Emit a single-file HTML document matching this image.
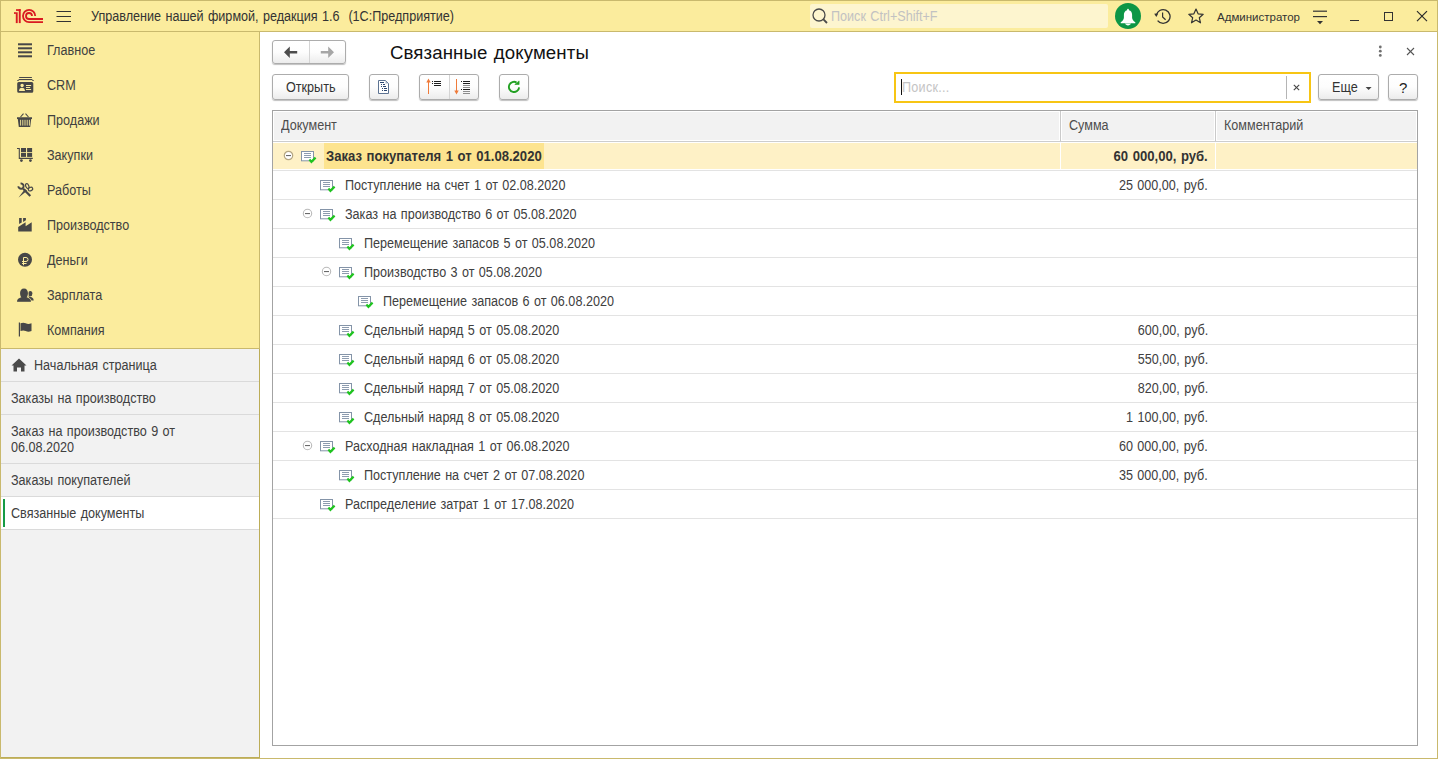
<!DOCTYPE html>
<html><head><meta charset="utf-8">
<style>
*{margin:0;padding:0;box-sizing:border-box}
html,body{width:1438px;height:759px;overflow:hidden;background:#fff;font-family:"Liberation Sans",sans-serif;font-size:13px;color:#404040}
.a{position:absolute}
.t{position:absolute;white-space:pre;line-height:16px;font-size:14px;transform:scaleX(.9);transform-origin:0 0;word-spacing:1px}
.r{transform-origin:100% 0}
.b{transform:scaleX(.935)}
#frame{position:absolute;left:0;top:0;width:1438px;height:759px;border:1px solid #c9b96d;pointer-events:none;z-index:50}
#hdr{position:absolute;left:0;top:0;width:1438px;height:32px;background:#fbec9d;border-bottom:1px solid #c9b96d}
#side{position:absolute;left:0;top:32px;width:260px;height:317px;background:#fbec9d;border-right:1px solid #c9b96d;border-bottom:1px solid #c9b96d}
#ow{position:absolute;left:0;top:349px;width:260px;height:409px;background:#f2f2f2;border-right:1px solid #bcad58;border-bottom:1px solid #bcad58}
.owl{position:absolute;left:1px;width:258px;height:1px;background:#dadada}
.btn{position:absolute;height:26px;border:1px solid #acacac;border-radius:3px;background:linear-gradient(#fff 0%,#fdfdfd 50%,#ececec 100%);box-shadow:0 1px 1px rgba(0,0,0,.25)}
.row{position:absolute;left:273px;width:1144px;height:1px;background:#e3e3e3}
.ic{position:absolute}
</style></head><body>

<div id="hdr"></div>
<svg class="a" style="left:0;top:0" width="50" height="31" viewBox="0 0 50 31">
 <g fill="#d91a21">
  <rect x="16" y="9.2" width="4.7" height="1.7"/>
  <rect x="15.8" y="12.3" width="1.9" height="10.8"/>
  <rect x="18.8" y="9.2" width="1.9" height="13.9"/>
  <rect x="14" y="12.2" width="1.9" height="1.7"/>
 </g>
 <g fill="none" stroke="#d91a21" stroke-width="1.8">
  <path d="M35.2 16 A6.1 6.1 0 1 0 29.1 22.1 L43 22.1"/>
  <path d="M32 16 A3 3 0 1 0 29 19 L43 19"/>
 </g>
</svg>
<svg class="a" style="left:55px;top:9px" width="18" height="15">
 <g stroke="#333" stroke-width="1"><line x1="1.5" y1="2.5" x2="16" y2="2.5"/><line x1="1.5" y1="7.5" x2="16" y2="7.5"/><line x1="1.5" y1="12.5" x2="16" y2="12.5"/></g>
</svg>
<div class="t" style="left:91px;top:8px;color:#333">Управление нашей фирмой, редакция 1.6  (1С:Предприятие)</div>
<div class="a" style="left:810px;top:4px;width:298px;height:24px;background:#fdf5cf;border-radius:2px"></div>
<svg class="a" style="left:810px;top:6px" width="20" height="20">
 <circle cx="9" cy="9" r="6" fill="none" stroke="#4a4a4a" stroke-width="1.3"/><line x1="13.2" y1="13.2" x2="17" y2="17" stroke="#4a4a4a" stroke-width="1.8"/>
</svg>
<div class="t" style="left:831px;top:8px;color:#c2c2c2">Поиск Ctrl+Shift+F</div>
<div class="a" style="left:1115px;top:3px;width:26px;height:26px;border-radius:50%;background:#0d9646"></div>
<svg class="a" style="left:1115px;top:3px" width="26" height="26">
 <path d="M13 5.8c-.6 0-.9.4-.9.9v.5c-2.1.5-3.2 2.3-3.2 4.6v2.6c0 1.9-1.1 3.2-3.2 4.9v.9h14.6v-.9c-2.1-1.7-3.2-3-3.2-4.9v-2.6c0-2.3-1.1-4.1-3.2-4.6v-.5c0-.5-.3-.9-.9-.9z" fill="#fff"/>
 <path d="M10 20.6h6c-.4 1.1-1.6 1.8-3 1.8s-2.6-.7-3-1.8z" fill="#fff"/>
</svg>
<svg class="a" style="left:1153px;top:8px" width="18" height="18">
 <path d="M3.3 7.6 A6.9 6.9 0 1 1 4.6 12.6" fill="none" stroke="#333" stroke-width="1.3"/>
 <path d="M1.2 5.8 L5.2 5.2 L3.4 9 Z" fill="#333"/>
 <path d="M9.6 4.5 V9 L12.6 11.8" fill="none" stroke="#333" stroke-width="1.2"/>
</svg>
<svg class="a" style="left:1188px;top:8px" width="17" height="17">
 <path d="M8 1 L10.1 5.8 L15.2 6.3 L11.3 9.7 L12.5 14.8 L8 12.1 L3.5 14.8 L4.7 9.7 L0.8 6.3 L5.9 5.8 Z" fill="none" stroke="#333" stroke-width="1.2" stroke-linejoin="round"/>
</svg>
<div class="t" style="left:1217px;top:9px;font-size:11.5px;color:#333;transform:none">Администратор</div>
<svg class="a" style="left:1312px;top:8px" width="16" height="18">
 <g fill="#333"><rect x="1" y="2.6" width="14" height="1.2"/><rect x="1" y="8" width="14" height="1.2"/></g>
 <path d="M5 13 H11 L8 16.2 Z" fill="#333"/>
</svg>
<div class="a" style="left:1350px;top:20px;width:9px;height:1px;background:#333"></div>
<div class="a" style="left:1384px;top:12px;width:9px;height:9px;border:1px solid #333"></div>
<svg class="a" style="left:1415px;top:10px" width="13" height="13">
 <g stroke="#2a2a2a" stroke-width="1.15"><line x1="2" y1="1.2" x2="12" y2="11.2"/><line x1="12" y1="1.2" x2="2" y2="11.2"/></g>
</svg>


<div id="side"></div>
<svg class="a" style="left:0;top:32px" width="40" height="316" viewBox="0 32 40 316">
 <g fill="#474747">
  <!-- main: 4 bars -->
  <rect x="18" y="43.3" width="14" height="2"/><rect x="18" y="47.3" width="14" height="2"/><rect x="18" y="51.3" width="14" height="2"/><rect x="18" y="55.3" width="14" height="2"/>
  <!-- CRM card -->
  <rect x="19" y="77" width="13" height="1.1" rx=".5"/>
  <rect x="18.6" y="79" width="13.8" height="1.1"/><rect x="17.3" y="80" width="1.4" height="1"/><rect x="32.3" y="80" width="1.4" height="1"/>
  <path d="M18.7 82 h13.1 a1.5 1.5 0 0 1 1.5 1.5 v7.7 a1.5 1.5 0 0 1 -1.5 1.5 h-13.1 a1.5 1.5 0 0 1 -1.5 -1.5 v-7.7 a1.5 1.5 0 0 1 1.5 -1.5z M22.1 83.7 a1.7 1.7 0 1 0 .01 0z M19 91 h6 c0-2.1-1.3-3.3-3-3.3 s-3 1.2-3 3.3z M26 84.9 h5.1 v1 h-5.1z M26 86.9 h4.2 v1 h-4.2z M26 88.9 h5.1 v1 h-5.1z" fill-rule="evenodd"/>
  <!-- basket -->
  <path d="M17 117.3 h15 v1.6 h-0.8 l-1 8 h-11.4 l-1 -8 h-0.8z" /><g stroke="#fbec9d" stroke-width="0.9"><line x1="20.6" y1="119.8" x2="20.6" y2="125.6"/><line x1="22.8" y1="119.8" x2="22.8" y2="125.6"/><line x1="25" y1="119.8" x2="25" y2="125.6"/><line x1="27.2" y1="119.8" x2="27.2" y2="125.6"/><line x1="29.4" y1="119.8" x2="29.4" y2="125.6"/></g>
  <path d="M20.5 117 l3 -3.3 M28.5 117 l-3 -3.3" stroke="#474747" stroke-width="1.1" fill="none"/>
  <!-- cart -->
  <path d="M17 148.5 H19.3 V158.4 H32.8" stroke="#474747" stroke-width="1.1" fill="none"/>
  <rect x="21" y="148" width="5" height="4.2"/><rect x="27.1" y="148" width="5" height="4.2"/>
  <rect x="21" y="153" width="5" height="3.9"/><rect x="27.1" y="153" width="5" height="3.9"/>
  <circle cx="21.4" cy="160.6" r="1.4"/><circle cx="30.4" cy="160.6" r="1.4"/>
  <!-- tools -->
  <path d="M18.4 186.2 A2.6 2.6 0 1 0 20.55 183.6" stroke="#474747" stroke-width="1.9" fill="none"/>
  <path d="M23.2 188.8 L30.3 196" stroke="#474747" stroke-width="2.2" fill="none"/>
  <ellipse cx="27.3" cy="186.1" rx="1.5" ry="2.5" transform="rotate(-25 27.3 186.1)" stroke="#474747" stroke-width="1.15" fill="none"/>
  <ellipse cx="30.5" cy="189.1" rx="2.3" ry="1.7" transform="rotate(-25 30.5 189.1)" stroke="#474747" stroke-width="1.15" fill="none"/>
  <path d="M18.6 197.4 L24.9 188.9 L27.1 190.8 Z"/>
  <!-- factory -->
  <path d="M18.2 231.6 V227 L25.6 222.3 V226.2 L31.7 222.3 V231.6 Z"/>
  <path d="M19.1 218 H21.7 V222.5 L19.1 224.1 Z"/><path d="M23.1 218 H25.9 V220.2 L23.1 221.9 Z"/>
  <!-- ruble -->
  <circle cx="25" cy="259.8" r="7"/>
  <g stroke="#fbec9d" stroke-width="1" fill="none"><path d="M23.5 265.2 V257.5 H26 A2 2 0 0 1 26 261.5 H22"/><path d="M22 263.5 H26.5"/></g>
  <!-- people -->
  <ellipse cx="30.3" cy="293.6" rx="2.1" ry="2.7"/>
  <path d="M28.4 296.2 c2.6 .4 5.2 1.4 5.2 3.8 v.6 h-4z"/>
  <path d="M17 301.8 c0-2.6 1.9-3.8 4.4-4.5 c-.9-.9-1.3-2.4-1.3-4.2 c0-2.6 1.6-4.7 3.9-4.7 s3.9 2.1 3.9 4.7 c0 1.8-.4 3.3-1.3 4.2 c2.5 .7 4.4 1.9 4.4 4.5z" stroke="#fbec9d" stroke-width="1.2"/>
  <path d="M17 301.8 c0-2.6 1.9-3.8 4.4-4.5 c-.9-.9-1.3-2.4-1.3-4.2 c0-2.6 1.6-4.7 3.9-4.7 s3.9 2.1 3.9 4.7 c0 1.8-.4 3.3-1.3 4.2 c2.5 .7 4.4 1.9 4.4 4.5z"/>
  <!-- flag -->
  <rect x="18.8" y="322.5" width="1.2" height="14"/>
  <path d="M20.5 323.3 c2-.8 3.5-.8 5.2 0 c1.8 .8 3.5 .8 5.8 0 v7.8 c-2.3 .8-4 .8-5.8 0 c-1.7-.8-3.2-.8-5.2 0z"/>
 </g>
</svg>
<div class="t" style="left:47px;top:42px">Главное</div>
<div class="t" style="left:47px;top:77px">CRM</div>
<div class="t" style="left:47px;top:112px">Продажи</div>
<div class="t" style="left:47px;top:147px">Закупки</div>
<div class="t" style="left:47px;top:182px">Работы</div>
<div class="t" style="left:47px;top:217px">Производство</div>
<div class="t" style="left:47px;top:252px">Деньги</div>
<div class="t" style="left:47px;top:287px">Зарплата</div>
<div class="t" style="left:47px;top:322px">Компания</div>


<div id="ow"></div>
<svg class="a" style="left:11px;top:357px" width="17" height="16">
 <path d="M8 1.5 L15.5 8.5 H13.5 V14.5 H10 V10.5 H6 V14.5 H2.5 V8.5 H0.5 Z" fill="#4a4a4a"/>
</svg>
<div class="t" style="left:34px;top:357px">Начальная страница</div>
<div class="owl" style="top:381px"></div>
<div class="t" style="left:11px;top:390px">Заказы на производство</div>
<div class="owl" style="top:414px"></div>
<div class="t" style="left:11px;top:423px">Заказ на производство 9 от</div>
<div class="t" style="left:11px;top:439px">06.08.2020</div>
<div class="owl" style="top:463px"></div>
<div class="t" style="left:11px;top:472px">Заказы покупателей</div>
<div class="owl" style="top:496px"></div>
<div class="a" style="left:1px;top:497px;width:258px;height:32px;background:#fff"></div>
<div class="a" style="left:3px;top:499px;width:2px;height:28px;background:#169b45"></div>
<div class="t" style="left:11px;top:505px">Связанные документы</div>
<div class="owl" style="top:529px"></div>


<!-- nav buttons -->
<div class="btn" style="left:272px;top:40px;width:74px;height:24px"></div>
<div class="a" style="left:309px;top:41px;width:1px;height:22px;background:#d4d4d4"></div>
<svg class="a" style="left:283px;top:45px" width="18" height="15">
 <path d="M1 7.3 L6.8 1.6 V6 H14.2 V8.6 H6.8 V13 Z" fill="#4d4d4d"/>
</svg>
<svg class="a" style="left:317px;top:45px" width="18" height="15">
 <path d="M17 7.3 L11.2 1.6 V6 H3.8 V8.6 H11.2 V13 Z" fill="#a6a6a6"/>
</svg>
<div class="t" style="left:390px;top:42px;font-size:18.67px;line-height:22px;color:#111;transform:none;letter-spacing:0.1px">Связанные документы</div>
<svg class="a" style="left:1376px;top:44px" width="8" height="15">
 <g fill="#707070"><circle cx="4.3" cy="3" r="1.4"/><circle cx="4.3" cy="7.2" r="1.4"/><circle cx="4.3" cy="11.4" r="1.4"/></g>
</svg>
<svg class="a" style="left:1405px;top:46px" width="12" height="12">
 <g stroke="#555" stroke-width="1.1"><line x1="2" y1="2" x2="9" y2="9"/><line x1="9" y1="2" x2="2" y2="9"/></g>
</svg>
<!-- toolbar -->
<div class="btn" style="left:272px;top:74px;width:77px;height:26px"></div>
<div class="t" style="left:286px;top:79px;color:#333">Открыть</div>
<div class="btn" style="left:369px;top:74px;width:30px;height:26px"></div>
<svg class="a" style="left:374px;top:76px" width="20" height="22">
 <path d="M4.5 4.5 H11.5 L14.5 7.5 V17.5 H4.5 Z" fill="#fff" stroke="#5d7392" stroke-width="1"/>
 <path d="M11.5 4.8 L14.2 7.5 H11.5 Z" fill="#a7b4c6"/>
 <g fill="#2c4770"><rect x="6" y="6" width="4" height="1"/><rect x="7" y="8" width="1" height="1"/><rect x="9" y="8" width="2" height="1"/><rect x="7" y="10" width="1" height="1"/><rect x="9" y="10" width="3" height="1"/><rect x="8" y="12" width="1" height="1"/><rect x="10" y="12" width="3" height="1"/><rect x="8" y="14" width="1" height="1"/><rect x="10" y="14" width="3" height="1"/></g>
</svg>
<div class="btn" style="left:419px;top:74px;width:60px;height:26px"></div>
<div class="a" style="left:449px;top:75px;width:1px;height:24px;background:#d4d4d4"></div>
<svg class="a" style="left:425px;top:76px" width="22" height="22">
 <rect x="3" y="5" width="1" height="13" fill="#ef7b3a"/><path d="M3.5 2.5 L1.3 6.5 H5.7 Z" fill="#ef7b3a"/>
 <g fill="#1e1e1e"><rect x="7" y="5" width="1" height="1"/><rect x="9" y="5" width="7" height="1"/><rect x="7" y="7" width="1" height="1"/><rect x="9" y="7" width="7" height="1"/><rect x="9" y="9" width="7" height="1"/></g>
</svg>
<svg class="a" style="left:452px;top:76px" width="22" height="22">
 <rect x="4" y="3" width="1" height="13" fill="#ef7b3a"/><path d="M4.5 18.5 L2.3 14.5 H6.7 Z" fill="#ef7b3a"/>
 <g fill="#1e1e1e"><rect x="9" y="5" width="1" height="1"/><rect x="11" y="5" width="7" height="1"/><rect x="11" y="7" width="7" height="1"/><rect x="9" y="13" width="1" height="1"/><rect x="11" y="13" width="7" height="1"/></g>
 <g fill="#8c8c8c"><rect x="11" y="9" width="7" height="1"/><rect x="11" y="11" width="7" height="1"/><rect x="11" y="15" width="7" height="1"/><rect x="11" y="17" width="7" height="1"/></g>
</svg>
<div class="btn" style="left:499px;top:74px;width:30px;height:26px"></div>
<svg class="a" style="left:505px;top:78px" width="18" height="18">
 <path d="M14.1 9.3 A5.1 5.1 0 1 1 11.6 4.5" fill="none" stroke="#22a022" stroke-width="1.9"/>
 <path d="M9.8 6.5 H14.1 V2.9 Z" fill="#22a022" stroke="#22a022" stroke-width="0.6" stroke-linejoin="round"/>
</svg>
<!-- search -->
<div class="a" style="left:894px;top:72px;width:417px;height:31px;border:2px solid #f7c514;background:#fff"></div>
<div class="a" style="left:901px;top:79px;width:1px;height:16px;background:#111"></div>
<div class="t" style="left:902px;top:79px;color:#c4c4c4;letter-spacing:.3px">Поиск...</div>
<div class="a" style="left:1286px;top:76px;width:1px;height:23px;background:#b5b5b5"></div>
<svg class="a" style="left:1291px;top:82px" width="10" height="10">
 <g stroke="#444" stroke-width="1.1"><line x1="2.8" y1="2.8" x2="8.2" y2="8.2"/><line x1="8.2" y1="2.8" x2="2.8" y2="8.2"/></g>
</svg>
<div class="btn" style="left:1318px;top:74px;width:61px;height:26px"></div>
<div class="t" style="left:1332px;top:79px;color:#333">Еще</div>
<svg class="a" style="left:1365px;top:86px" width="8" height="5"><path d="M0.6 1 H6.6 L3.6 4 Z" fill="#444"/></svg>
<div class="btn" style="left:1388px;top:74px;width:30px;height:26px"></div>
<div class="t" style="left:1399px;top:79px;font-size:15px;line-height:17px;color:#222;transform:none">?</div>
<!-- table -->
<div class="a" style="left:272px;top:110px;width:1146px;height:636px;border:1px solid #a3a3a3;background:#fff"></div>
<div class="a" style="left:273px;top:111px;width:1144px;height:31px;background:#fff;border-bottom:1px solid #cdcdcd"></div>
<div class="a" style="left:274px;top:112px;width:785px;height:28px;background:#f2f2f2"></div>
<div class="a" style="left:1060px;top:111px;width:1px;height:30px;background:#cacaca"></div>
<div class="a" style="left:1062px;top:112px;width:152px;height:28px;background:#f2f2f2"></div>
<div class="a" style="left:1215px;top:111px;width:1px;height:30px;background:#cacaca"></div>
<div class="a" style="left:1217px;top:112px;width:199px;height:28px;background:#f2f2f2"></div>
<div class="t" style="left:281px;top:117px;color:#4d4d4d">Документ</div>
<div class="t" style="left:1069px;top:117px;color:#4d4d4d">Сумма</div>
<div class="t" style="left:1224px;top:117px;color:#4d4d4d">Комментарий</div>
<!-- selected row -->
<div class="a" style="left:273px;top:143px;width:787px;height:26px;background:#fef1c6"></div>
<div class="a" style="left:1061px;top:143px;width:154px;height:26px;background:#fef1c6"></div>
<div class="a" style="left:1216px;top:143px;width:201px;height:26px;background:#fef1c6"></div>
<div class="a" style="left:324px;top:143px;width:220px;height:26px;background:#fde48f"></div>

<div class="row" style="top:170px"></div>
<svg class="a" style="left:300px;top:150px" width="18" height="16" viewBox="0 0 18 16">
 <rect x="1.5" y="1.5" width="12" height="9.3" fill="#fff" stroke="#8494a8" stroke-width="1"/>
 <g fill="#8d9caf"><rect x="4" y="3" width="7" height="1"/><rect x="4" y="5" width="7" height="1"/><rect x="4" y="7" width="7" height="1"/></g>
 <path d="M9.4 9.6 L11.4 11.8 L15.6 7.6" fill="none" stroke="#1fc41f" stroke-width="2.2"/>
</svg>
<svg class="a" style="left:283px;top:150px" width="11" height="11" viewBox="0 0 11 11">
 <circle cx="5.5" cy="5.5" r="4.2" fill="#fff" stroke="#b5a783" stroke-width="1.2"/><rect x="3" y="5" width="5" height="1.1" fill="#6a6a6a"/>
</svg>
<div class="t b" style="left:326px;top:148px;font-weight:bold;color:#333;">Заказ покупателя 1 от 01.08.2020</div>
<div class="t r b" style="right:230px;top:148px;font-weight:bold;color:#333;">60 000,00, руб.</div>
<div class="row" style="top:199px"></div>
<svg class="a" style="left:319px;top:179px" width="18" height="16" viewBox="0 0 18 16">
 <rect x="1.5" y="1.5" width="12" height="9.3" fill="#fff" stroke="#8494a8" stroke-width="1"/>
 <g fill="#8d9caf"><rect x="4" y="3" width="7" height="1"/><rect x="4" y="5" width="7" height="1"/><rect x="4" y="7" width="7" height="1"/></g>
 <path d="M9.4 9.6 L11.4 11.8 L15.6 7.6" fill="none" stroke="#1fc41f" stroke-width="2.2"/>
</svg>
<div class="t" style="left:345px;top:177px;">Поступление на счет 1 от 02.08.2020</div>
<div class="t r" style="right:230px;top:177px;">25 000,00, руб.</div>
<div class="row" style="top:228px"></div>
<svg class="a" style="left:319px;top:208px" width="18" height="16" viewBox="0 0 18 16">
 <rect x="1.5" y="1.5" width="12" height="9.3" fill="#fff" stroke="#8494a8" stroke-width="1"/>
 <g fill="#8d9caf"><rect x="4" y="3" width="7" height="1"/><rect x="4" y="5" width="7" height="1"/><rect x="4" y="7" width="7" height="1"/></g>
 <path d="M9.4 9.6 L11.4 11.8 L15.6 7.6" fill="none" stroke="#1fc41f" stroke-width="2.2"/>
</svg>
<svg class="a" style="left:302px;top:208px" width="11" height="11" viewBox="0 0 11 11">
 <circle cx="5.5" cy="5.5" r="4.2" fill="#fff" stroke="#bababa" stroke-width="1.1"/><rect x="3" y="5" width="5" height="1.1" fill="#6a6a6a"/>
</svg>
<div class="t" style="left:345px;top:206px;">Заказ на производство 6 от 05.08.2020</div>
<div class="row" style="top:257px"></div>
<svg class="a" style="left:338px;top:237px" width="18" height="16" viewBox="0 0 18 16">
 <rect x="1.5" y="1.5" width="12" height="9.3" fill="#fff" stroke="#8494a8" stroke-width="1"/>
 <g fill="#8d9caf"><rect x="4" y="3" width="7" height="1"/><rect x="4" y="5" width="7" height="1"/><rect x="4" y="7" width="7" height="1"/></g>
 <path d="M9.4 9.6 L11.4 11.8 L15.6 7.6" fill="none" stroke="#1fc41f" stroke-width="2.2"/>
</svg>
<div class="t" style="left:364px;top:235px;">Перемещение запасов 5 от 05.08.2020</div>
<div class="row" style="top:286px"></div>
<svg class="a" style="left:338px;top:266px" width="18" height="16" viewBox="0 0 18 16">
 <rect x="1.5" y="1.5" width="12" height="9.3" fill="#fff" stroke="#8494a8" stroke-width="1"/>
 <g fill="#8d9caf"><rect x="4" y="3" width="7" height="1"/><rect x="4" y="5" width="7" height="1"/><rect x="4" y="7" width="7" height="1"/></g>
 <path d="M9.4 9.6 L11.4 11.8 L15.6 7.6" fill="none" stroke="#1fc41f" stroke-width="2.2"/>
</svg>
<svg class="a" style="left:321px;top:266px" width="11" height="11" viewBox="0 0 11 11">
 <circle cx="5.5" cy="5.5" r="4.2" fill="#fff" stroke="#bababa" stroke-width="1.1"/><rect x="3" y="5" width="5" height="1.1" fill="#6a6a6a"/>
</svg>
<div class="t" style="left:364px;top:264px;">Производство 3 от 05.08.2020</div>
<div class="row" style="top:315px"></div>
<svg class="a" style="left:357px;top:295px" width="18" height="16" viewBox="0 0 18 16">
 <rect x="1.5" y="1.5" width="12" height="9.3" fill="#fff" stroke="#8494a8" stroke-width="1"/>
 <g fill="#8d9caf"><rect x="4" y="3" width="7" height="1"/><rect x="4" y="5" width="7" height="1"/><rect x="4" y="7" width="7" height="1"/></g>
 <path d="M9.4 9.6 L11.4 11.8 L15.6 7.6" fill="none" stroke="#1fc41f" stroke-width="2.2"/>
</svg>
<div class="t" style="left:383px;top:293px;">Перемещение запасов 6 от 06.08.2020</div>
<div class="row" style="top:344px"></div>
<svg class="a" style="left:338px;top:324px" width="18" height="16" viewBox="0 0 18 16">
 <rect x="1.5" y="1.5" width="12" height="9.3" fill="#fff" stroke="#8494a8" stroke-width="1"/>
 <g fill="#8d9caf"><rect x="4" y="3" width="7" height="1"/><rect x="4" y="5" width="7" height="1"/><rect x="4" y="7" width="7" height="1"/></g>
 <path d="M9.4 9.6 L11.4 11.8 L15.6 7.6" fill="none" stroke="#1fc41f" stroke-width="2.2"/>
</svg>
<div class="t" style="left:364px;top:322px;">Сдельный наряд 5 от 05.08.2020</div>
<div class="t r" style="right:230px;top:322px;">600,00, руб.</div>
<div class="row" style="top:373px"></div>
<svg class="a" style="left:338px;top:353px" width="18" height="16" viewBox="0 0 18 16">
 <rect x="1.5" y="1.5" width="12" height="9.3" fill="#fff" stroke="#8494a8" stroke-width="1"/>
 <g fill="#8d9caf"><rect x="4" y="3" width="7" height="1"/><rect x="4" y="5" width="7" height="1"/><rect x="4" y="7" width="7" height="1"/></g>
 <path d="M9.4 9.6 L11.4 11.8 L15.6 7.6" fill="none" stroke="#1fc41f" stroke-width="2.2"/>
</svg>
<div class="t" style="left:364px;top:351px;">Сдельный наряд 6 от 05.08.2020</div>
<div class="t r" style="right:230px;top:351px;">550,00, руб.</div>
<div class="row" style="top:402px"></div>
<svg class="a" style="left:338px;top:382px" width="18" height="16" viewBox="0 0 18 16">
 <rect x="1.5" y="1.5" width="12" height="9.3" fill="#fff" stroke="#8494a8" stroke-width="1"/>
 <g fill="#8d9caf"><rect x="4" y="3" width="7" height="1"/><rect x="4" y="5" width="7" height="1"/><rect x="4" y="7" width="7" height="1"/></g>
 <path d="M9.4 9.6 L11.4 11.8 L15.6 7.6" fill="none" stroke="#1fc41f" stroke-width="2.2"/>
</svg>
<div class="t" style="left:364px;top:380px;">Сдельный наряд 7 от 05.08.2020</div>
<div class="t r" style="right:230px;top:380px;">820,00, руб.</div>
<div class="row" style="top:431px"></div>
<svg class="a" style="left:338px;top:411px" width="18" height="16" viewBox="0 0 18 16">
 <rect x="1.5" y="1.5" width="12" height="9.3" fill="#fff" stroke="#8494a8" stroke-width="1"/>
 <g fill="#8d9caf"><rect x="4" y="3" width="7" height="1"/><rect x="4" y="5" width="7" height="1"/><rect x="4" y="7" width="7" height="1"/></g>
 <path d="M9.4 9.6 L11.4 11.8 L15.6 7.6" fill="none" stroke="#1fc41f" stroke-width="2.2"/>
</svg>
<div class="t" style="left:364px;top:409px;">Сдельный наряд 8 от 05.08.2020</div>
<div class="t r" style="right:230px;top:409px;">1 100,00, руб.</div>
<div class="row" style="top:460px"></div>
<svg class="a" style="left:319px;top:440px" width="18" height="16" viewBox="0 0 18 16">
 <rect x="1.5" y="1.5" width="12" height="9.3" fill="#fff" stroke="#8494a8" stroke-width="1"/>
 <g fill="#8d9caf"><rect x="4" y="3" width="7" height="1"/><rect x="4" y="5" width="7" height="1"/><rect x="4" y="7" width="7" height="1"/></g>
 <path d="M9.4 9.6 L11.4 11.8 L15.6 7.6" fill="none" stroke="#1fc41f" stroke-width="2.2"/>
</svg>
<svg class="a" style="left:302px;top:440px" width="11" height="11" viewBox="0 0 11 11">
 <circle cx="5.5" cy="5.5" r="4.2" fill="#fff" stroke="#bababa" stroke-width="1.1"/><rect x="3" y="5" width="5" height="1.1" fill="#6a6a6a"/>
</svg>
<div class="t" style="left:345px;top:438px;">Расходная накладная 1 от 06.08.2020</div>
<div class="t r" style="right:230px;top:438px;">60 000,00, руб.</div>
<div class="row" style="top:489px"></div>
<svg class="a" style="left:338px;top:469px" width="18" height="16" viewBox="0 0 18 16">
 <rect x="1.5" y="1.5" width="12" height="9.3" fill="#fff" stroke="#8494a8" stroke-width="1"/>
 <g fill="#8d9caf"><rect x="4" y="3" width="7" height="1"/><rect x="4" y="5" width="7" height="1"/><rect x="4" y="7" width="7" height="1"/></g>
 <path d="M9.4 9.6 L11.4 11.8 L15.6 7.6" fill="none" stroke="#1fc41f" stroke-width="2.2"/>
</svg>
<div class="t" style="left:364px;top:467px;">Поступление на счет 2 от 07.08.2020</div>
<div class="t r" style="right:230px;top:467px;">35 000,00, руб.</div>
<div class="row" style="top:518px"></div>
<svg class="a" style="left:319px;top:498px" width="18" height="16" viewBox="0 0 18 16">
 <rect x="1.5" y="1.5" width="12" height="9.3" fill="#fff" stroke="#8494a8" stroke-width="1"/>
 <g fill="#8d9caf"><rect x="4" y="3" width="7" height="1"/><rect x="4" y="5" width="7" height="1"/><rect x="4" y="7" width="7" height="1"/></g>
 <path d="M9.4 9.6 L11.4 11.8 L15.6 7.6" fill="none" stroke="#1fc41f" stroke-width="2.2"/>
</svg>
<div class="t" style="left:345px;top:496px;">Распределение затрат 1 от 17.08.2020</div>
<div id="frame"></div>
</body></html>
